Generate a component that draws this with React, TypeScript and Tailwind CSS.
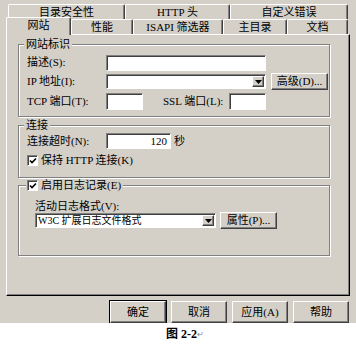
import React from "react";

const sunken =
  "bg-white border border-t-[#808080] border-l-[#808080] border-r-white border-b-white shadow-[inset_1px_1px_0_#404040]";
const raised =
  "bg-[#d4d0c8] border border-t-white border-l-white border-r-[#404040] border-b-[#404040] shadow-[inset_-1px_-1px_0_#808080]";

function Tab({ label, w, selected }: { label: string; w: string; selected?: boolean }) {
  if (selected) {
    return (
      <div
        className={`${w} h-[18px] -mb-px relative z-10 bg-[#d4d0c8] border-t border-l border-r border-t-white border-l-white border-r-[#404040] shadow-[inset_-1px_0_0_#808080] rounded-t-[2px] flex items-center justify-center pb-[2px]`}
      >
        {label}
      </div>
    );
  }
  return (
    <div
      className={`${w} h-[15px] bg-[#d4d0c8] border-t border-l border-r border-t-white border-l-white border-r-[#404040] shadow-[inset_-1px_0_0_#808080] rounded-t-[2px] flex items-center justify-center`}
    >
      {label}
    </div>
  );
}

function DropArrow() {
  return (
    <div className={`${raised} w-[12px] h-full flex items-center justify-center`}>
      <svg width="7" height="4" viewBox="0 0 7 4">
        <polygon points="0,0 7,0 3.5,4" fill="#000" />
      </svg>
    </div>
  );
}

function Check() {
  return (
    <div className={`${sunken} w-[11px] h-[11px] flex items-center justify-center`}>
      <svg width="8" height="8" viewBox="0 0 8 8">
        <polyline points="1,3.5 3,5.5 7,1.5" fill="none" stroke="#000" strokeWidth="1.6" />
      </svg>
    </div>
  );
}

function Btn({ label, className = "" }: { label: string; className?: string }) {
  return (
    <div className={`${raised} ${className} flex items-center justify-center`}>{label}</div>
  );
}

export default function App() {
  return (
    <div className="w-[356px] h-[346px] bg-white flex flex-col font-['Liberation_Serif','Noto_Sans_CJK_SC',serif] text-[11px] leading-[13px] text-black">
      <div className="h-[323px] bg-[#d4d0c8] overflow-hidden pt-[4px] flex flex-col">
        {/* tab row 1 */}
        <div className="flex ml-[8px] w-[340px]">
          <Tab label="目录安全性" w="w-[117px]" />
          <Tab label="HTTP 头" w="w-[105px]" />
          <Tab label="自定义错误" w="w-[118px]" />
        </div>
        {/* tab row 2 */}
        <div className="flex items-end h-[15px] ml-[6px]">
          <Tab label="网站" w="w-[65px]" selected />
          <Tab label="性能" w="w-[62px]" />
          <Tab label="ISAPI 筛选器" w="w-[90px]" />
          <Tab label="主目录" w="w-[64px]" />
          <Tab label="文档" w="w-[61px]" />
        </div>
        {/* panel */}
        <div className="ml-[6px] w-[344px] h-[266px] border border-t-white border-l-white border-r-black border-b-black shadow-[inset_-1px_-1px_0_#808080] pl-[11px] flex flex-col">
          {/* group 1 */}
          <div className="relative mt-[9px] w-[312px] h-[73px] border border-[#808080] shadow-[1px_1px_0_#fff,inset_1px_1px_0_#fff] pt-[9px] pl-[8px] flex flex-col gap-[2px]">
            <span className="absolute -top-[7px] left-[5px] px-[2px] bg-[#d4d0c8]">网站标识</span>
            <div className="flex items-center h-[17px]">
              <span className="w-[79px]">描述(S):</span>
              <div className={`${sunken} w-[160px] h-[16px]`} />
            </div>
            <div className="flex items-center h-[17px]">
              <span className="w-[79px]">IP 地址(I):</span>
              <div className={`${sunken} w-[160px] h-[15px] flex justify-end p-px`}>
                <DropArrow />
              </div>
              <Btn label="高级(D)..." className="ml-[5px] w-[57px] h-[17px]" />
            </div>
            <div className="flex items-center h-[17px] mt-[1px]">
              <span className="w-[79px]">TCP 端口(T):</span>
              <div className={`${sunken} w-[37px] h-[17px]`} />
              <span className="ml-[20px] w-[66px]">SSL 端口(L):</span>
              <div className={`${sunken} w-[37px] h-[17px]`} />
            </div>
          </div>
          {/* group 2 */}
          <div className="relative mt-[8px] w-[312px] h-[53px] border border-[#808080] shadow-[1px_1px_0_#fff,inset_1px_1px_0_#fff] pt-[7px] pl-[8px] flex flex-col gap-[5px]">
            <span className="absolute -top-[7px] left-[5px] px-[2px] bg-[#d4d0c8]">连接</span>
            <div className="flex items-center h-[16px]">
              <span className="w-[79px]">连接超时(N):</span>
              <div className={`${sunken} w-[65px] h-[16px] flex items-center justify-end pr-[3px]`}>120</div>
              <span className="ml-[3px]">秒</span>
            </div>
            <div className="flex items-center gap-[3px]">
              <Check />
              <span>保持 HTTP 连接(K)</span>
            </div>
          </div>
          {/* group 3 */}
          <div className="relative mt-[7px] w-[312px] h-[71px] border border-[#808080] shadow-[1px_1px_0_#fff,inset_1px_1px_0_#fff] pt-[14px] pl-[16px] flex flex-col">
            <div className="absolute -top-[7px] left-[7px] pl-[1px] pr-[2px] bg-[#d4d0c8] flex items-center gap-[3px]">
              <Check />
              <span>启用日志记录(E)</span>
            </div>
            <span className="h-[12px] leading-[12px]">活动日志格式(V):</span>
            <div className="flex items-center h-[17px]">
              <div className={`${sunken} w-[181px] h-[15px] flex items-center justify-between p-px`}>
                <span className="pl-[1px] text-[10px]">W3C 扩展日志文件格式</span>
                <DropArrow />
              </div>
              <Btn label="属性(P)..." className="ml-[4px] w-[57px] h-[17px]" />
            </div>
          </div>
        </div>
        {/* bottom buttons */}
        <div className="flex justify-end gap-[5px] pr-[7px] mt-[5px]">
          <Btn label="确定" className="w-[56px] h-[22px] outline outline-1 outline-black" />
          <Btn label="取消" className="w-[56px] h-[22px]" />
          <Btn label="应用(A)" className="w-[56px] h-[22px]" />
          <Btn label="帮助" className="w-[56px] h-[22px]" />
        </div>
      </div>
      <div className="flex-1 flex items-center justify-center pl-[14px]">
        <span className="font-bold text-[12px]">图 2-2</span>
        <span className="text-[8px] text-[#888]">↵</span>
      </div>
    </div>
  );
}
